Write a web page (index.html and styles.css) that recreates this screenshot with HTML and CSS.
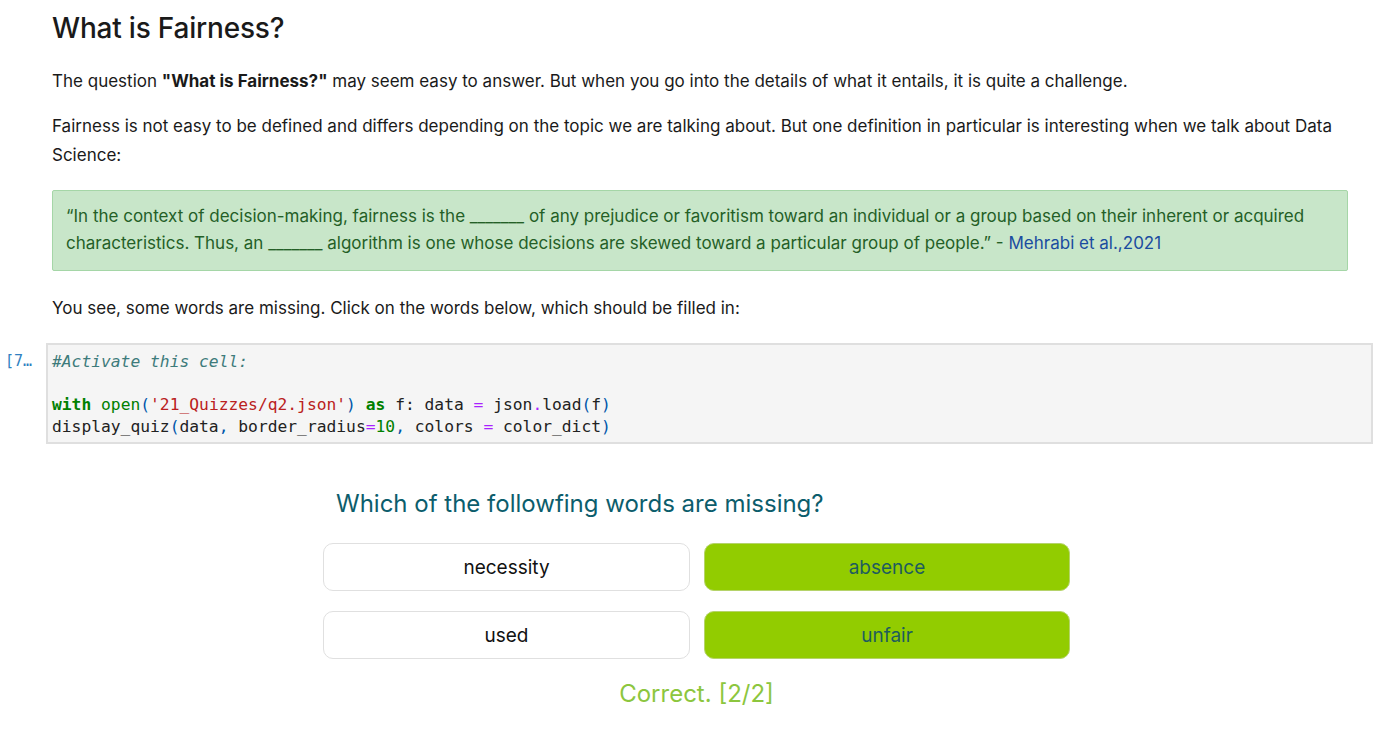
FILE: index.html
```html
<!DOCTYPE html>
<html>
<head>
<meta charset="utf-8">
<link rel="stylesheet" href="styles.css">
</head>
<body>
<div class="md">
  <h1 class="title">What is Fairness?</h1>
  <p class="p1">The question <b>"What is Fairness?"</b> may seem easy to answer. But when you go into the details of what it entails, it is quite a challenge.</p>
  <p class="p2">Fairness is not easy to be defined and differs depending on the topic we are talking about. But one definition in particular is interesting when we talk about Data Science:</p>
  <div class="quote">“In the context of decision-making, fairness is the _______ of any prejudice or favoritism toward an individual or a group based on their inherent or acquired characteristics. Thus, an _______ algorithm is one whose decisions are skewed toward a particular group of people.” - <a class="ref">Mehrabi et al.,2021</a></div>
  <p class="p3">You see, some words are missing. Click on the words below, which should be filled in:</p>
</div>
<div class="cell">
  <div class="prompt">[7…</div>
  <pre class="code"><span class="c">#Activate this cell:</span>

<span class="k">with</span> <span class="b">open</span><span class="pn">(</span><span class="s">'21_Quizzes/q2.json'</span><span class="pn">)</span> <span class="k">as</span> f: data <span class="o">=</span> json<span class="o">.</span>load<span class="pn">(</span>f<span class="pn">)</span>
display_quiz<span class="pn">(</span>data<span class="pn">,</span> border_radius<span class="o">=</span><span class="n">10</span><span class="pn">,</span> colors <span class="o">=</span> color_dict<span class="pn">)</span></pre>
</div>
<div class="quiz">
  <div class="question">Which of the followfing words are missing?</div>
  <div class="grid">
    <div class="opt">necessity</div>
    <div class="opt on">absence</div>
    <div class="opt">used</div>
    <div class="opt on">unfair</div>
  </div>
  <div class="result">Correct. [2/2]</div>
</div>
</body>
</html>
```
FILE: styles.css
```css
html, body { margin: 0; padding: 0; background: #fff; }
body {
  font-family: Inter, "Noto Sans", "Liberation Sans", sans-serif;
  color: #1a1a1a;
  width: 1400px;
  height: 729px;
  overflow: hidden;
}
.md { padding: 0 52px; }
.title {
  font-size: 28px;
  font-weight: 500;
  line-height: 34px;
  margin: 11px 0 0 0;
  letter-spacing: -0.2px;
}
.p1 {
  font-size: 17px;
  line-height: 28px;
  margin: 22px 0 0 0;
}
.p1 b { font-weight: 700; }
.p2 {
  font-size: 17px;
  line-height: 29px;
  margin: 17px 0 0 0;
}
.quote {
  margin: 20px 0 0 0;
  background: #c8e6c9;
  border: 1px solid #a5d6a7;
  border-radius: 2px;
  color: #245f27;
  font-size: 17px;
  line-height: 27px;
  padding: 12px 13px 13px 13px;
}
.ref { color: #1a4ca0; }
.p3 {
  font-size: 17px;
  line-height: 28px;
  margin: 23px 0 0 0;
}
.cell {
  display: flex;
  margin-top: 21px;
}
.prompt {
  width: 46px;
  box-sizing: border-box;
  padding: 9px 0 0 5px;
  font-family: "DejaVu Sans Mono", monospace;
  font-size: 15px;
  color: #307fc1;
}
.code {
  margin: 0;
  width: 1327px;
  box-sizing: border-box;
  background: #f5f5f5;
  border: 2px solid #dfdfdf;
  padding: 6px 5px 5px 4px;
  font-family: "DejaVu Sans Mono", monospace;
  font-size: 16.3px;
  line-height: 21.5px;
  color: #222;
}
.c { color: #3d7b7b; font-style: italic; }
.k { color: #008000; font-weight: bold; }
.b { color: #008000; }
.s { color: #ba2121; }
.o { color: #aa22ff; }
.n { color: #008000; }
.pn { color: #0055aa; }
.quiz {
  width: 747px;
  margin: 44px 0 0 323px;
}
.question {
  font-size: 24px;
  line-height: 32px;
  color: #0c5d6c;
  padding-left: 13px;
}
.grid {
  display: grid;
  grid-template-columns: 367px 366px;
  column-gap: 14px;
  row-gap: 20px;
  margin-top: 23px;
}
.opt {
  height: 48px;
  box-sizing: border-box;
  border: 1px solid #e0e0e0;
  border-radius: 10px;
  display: flex;
  align-items: center;
  justify-content: center;
  font-size: 19px;
  color: #111;
  background: #fff;
}
.opt.on {
  background: #92cc00;
  border-color: #b5d36a;
  color: #1e5c5e;
}
.result {
  text-align: center;
  font-size: 24px;
  line-height: 32px;
  color: #8cc63e;
  margin-top: 19px;
}
```
